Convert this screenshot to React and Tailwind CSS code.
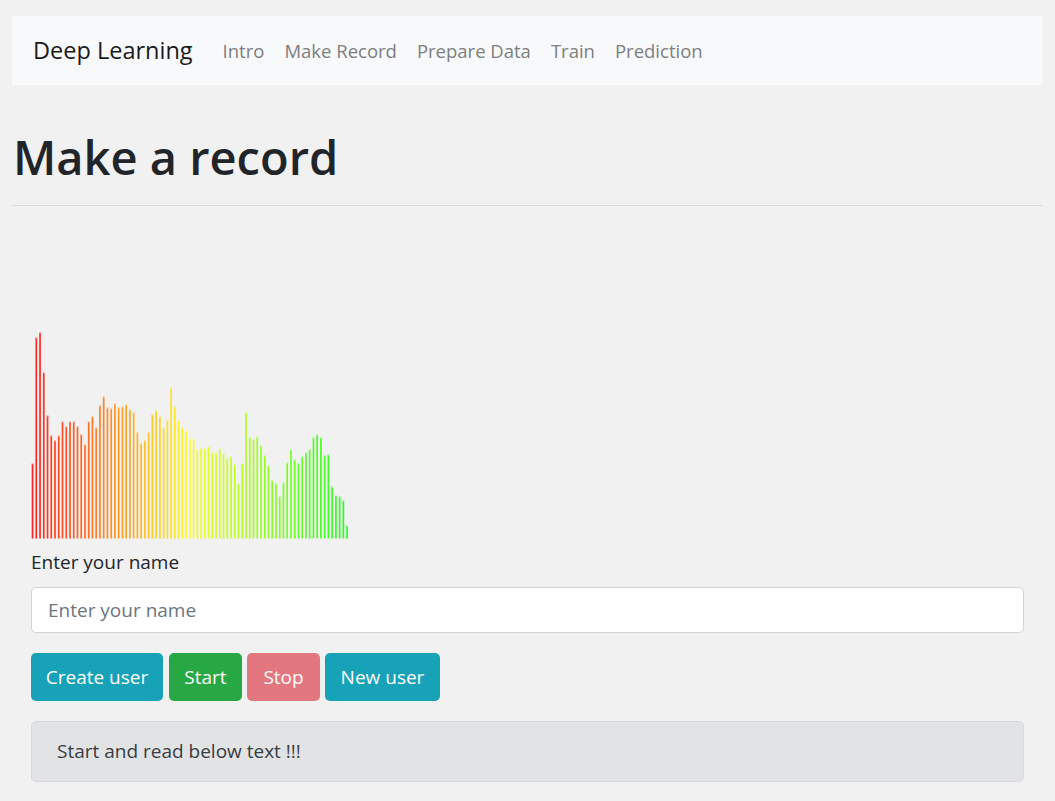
import React from "react";

const HEIGHTS = [
  75, 201, 206, 166, 123, 103, 98, 103, 117, 112, 117, 117, 112, 104, 94, 117,
  122, 111, 133, 142, 131, 130, 135, 131, 132, 134, 129, 126, 106, 95, 98, 106,
  124, 128, 122, 111, 118, 151, 132, 118, 111, 108, 100, 100, 89, 91, 90, 92,
  86, 86, 90, 85, 80, 82, 74, 55, 75, 126, 101, 99, 102, 93, 83, 73, 58, 55, 42,
  56, 76, 89, 79, 75, 82, 86, 89, 101, 104, 101, 83, 84, 52, 43, 42, 38, 13,
];

function Spectrum() {
  const base = 332.5;
  const n = HEIGHTS.length;
  return (
    <svg width="330" height="333" className="block" viewBox="0 0 330 333">
      {HEIGHTS.map((h, i) => {
        const hue = (i / (n - 1)) * 120;
        const x = 0.7 + i * 3.745;
        return (
          <g key={i}>
            <rect
              x={x}
              y={base - h}
              width={1.7}
              height={h}
              fill={`hsl(${hue}, 100%, 50%)`}
              fillOpacity={0.85}
            />
            <rect
              x={x}
              y={base - h}
              width={1.7}
              height={1}
              fill="#ffffff"
              fillOpacity={0.5}
            />
          </g>
        );
      })}
    </svg>
  );
}

export default function App() {
  const links = ["Intro", "Make Record", "Prepare Data", "Train", "Prediction"];
  return (
    <div className="min-h-screen bg-[#f1f1f1] font-['Open_Sans','Noto_Sans',sans-serif] text-[#212529]">
      <div className="px-[12px] pt-[16px] pb-[20px]">
        <nav className="flex h-[69px] items-center bg-[#f8f9fa] pl-[21px]">
          <span className="mr-[20px] text-[23.5px] text-[#1a1a1a]">Deep Learning</span>
          <div className="flex items-center">
            {links.map((l) => (
              <a key={l} className="px-[10px] text-[18.5px] text-[#7d7e7f]">
                {l}
              </a>
            ))}
          </div>
        </nav>

        <h1 className="mt-[44px] pl-[1px] text-[47px] leading-[1.2] font-semibold text-[#212529]">
          Make a record
        </h1>
        <hr className="mt-[20px] border-0 border-t border-[#d9d9d9]" />

        <div className="px-[19px]">
          <Spectrum />
          <label className="mt-[9px] block text-[19px] leading-[28.8px] text-[#212529]">
            Enter your name
          </label>
          <input
            className="mt-[10px] block h-[46px] w-full rounded-[5px] border border-[#ced4da] bg-white px-[16px] text-[19px] text-[#495057] outline-none placeholder:text-[#6c757d]"
            placeholder="Enter your name"
          />
          <div className="mt-[20px] flex">
            <button className="mr-[6px] h-[48px] w-[132px] rounded-[5px] bg-[#17a2b8] text-[19px] text-white">
              Create user
            </button>
            <button className="mr-[5px] h-[48px] w-[73px] rounded-[5px] bg-[#28a745] text-[19px] text-white">
              Start
            </button>
            <button className="mr-[5px] h-[48px] w-[73px] rounded-[5px] bg-[#e37780] text-[19px] text-[#fbfbfb]">
              Stop
            </button>
            <button className="h-[48px] w-[115px] rounded-[5px] bg-[#17a2b8] text-[19px] text-white">
              New user
            </button>
          </div>
          <div className="mt-[20px] flex h-[61px] items-center rounded-[5px] border border-[#d6d8db] bg-[#e2e3e5] pl-[25px] text-[19px] text-[#383d41]">
            Start and read below text !!!
          </div>
        </div>
      </div>
    </div>
  );
}
